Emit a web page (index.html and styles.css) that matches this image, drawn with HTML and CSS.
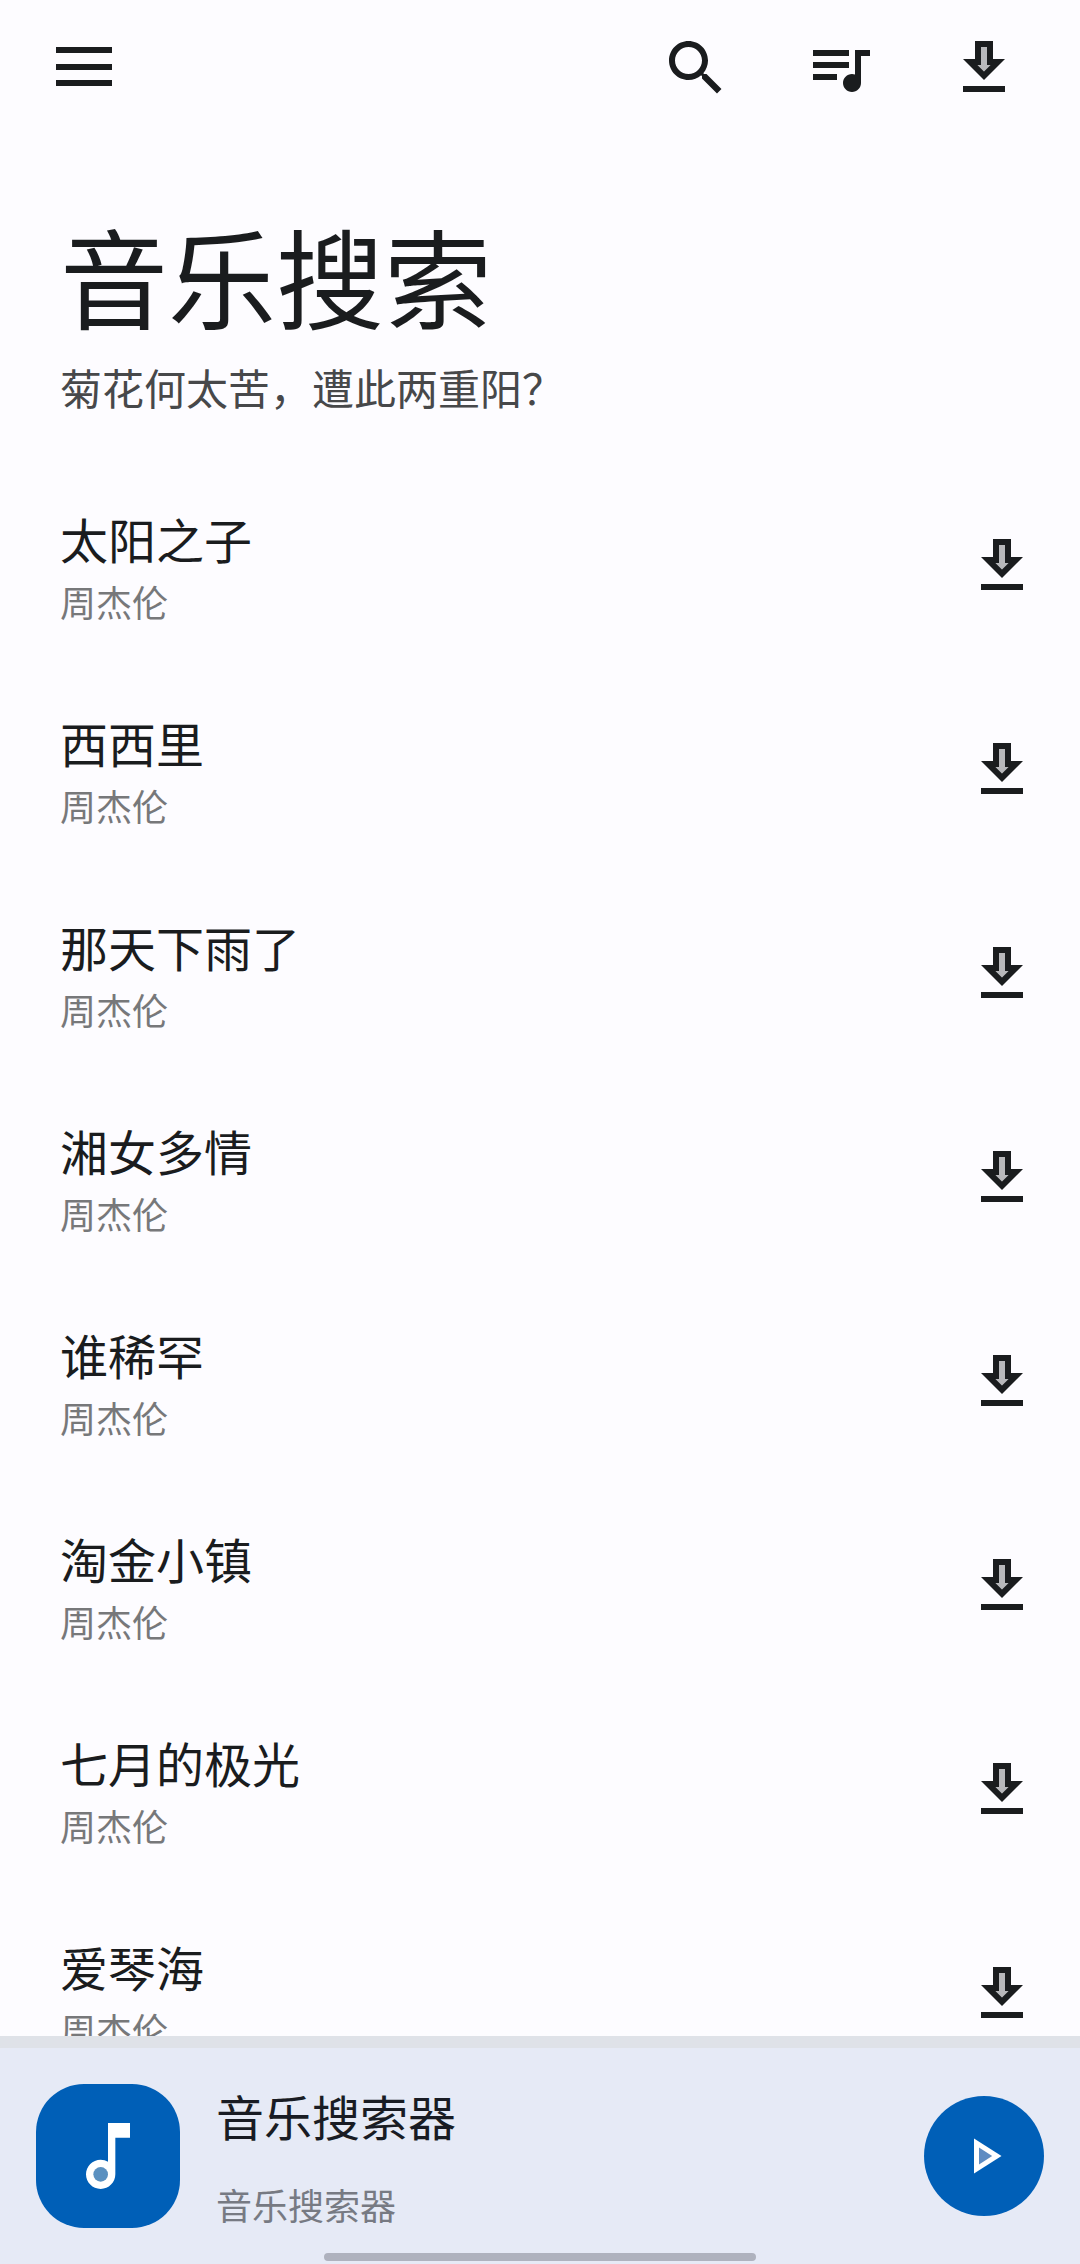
FILE: index.html
```html
<!DOCTYPE html>
<html lang="zh-CN">
<head>
<meta charset="utf-8">
<meta name="viewport" content="width=device-width, initial-scale=1">
<title>音乐搜索</title>
<link rel="stylesheet" href="styles.css">
</head>
<body>
<svg class="sprite" aria-hidden="true">
  <symbol id="download" viewBox="0 0 24 24">
    <path class="tone" d="M9.83 11L12 13.17 14.17 11H13V5h-2v6z"/>
    <path d="M19 9h-4V3H9v6H5l7 7 7-7zm-8 2V5h2v6h1.17L12 13.17 9.83 11H11zm-6 7h14v2H5z"/>
  </symbol>
</svg>
<header class="topbar">
  <button class="menu-button" type="button" aria-label="菜单">
    <svg class="menu-icon" viewBox="0 0 56 42"><path d="M0 0h56v6H0zM0 17h56v6H0zM0 33h56v6H0z"/></svg>
  </button>
  <nav class="actions" aria-label="工具">
    <button class="action" type="button" aria-label="搜索">
      <svg class="icon" viewBox="0 0 24 24"><path d="M15.5 14h-.79l-.28-.27C15.41 12.59 16 11.11 16 9.5 16 5.91 13.09 3 9.5 3S3 5.91 3 9.5 5.91 16 9.5 16c1.61 0 3.09-.59 4.23-1.57l.27.28v.79l5 4.99L20.49 19l-4.99-5zm-6 0C7.01 14 5 11.99 5 9.5S7.01 5 9.5 5 14 7.01 14 9.5 11.99 14 9.5 14z"/></svg>
    </button>
    <button class="action" type="button" aria-label="播放列表">
      <svg class="icon" viewBox="0 0 24 24"><path d="M15 6H3v2h12V6zm0 4H3v2h12v-2zM3 16h8v-2H3v2zM17 6v8.18c-.31-.11-.65-.18-1-.18-1.66 0-3 1.34-3 3s1.34 3 3 3 3-1.34 3-3V8h3V6h-5z"/></svg>
    </button>
    <button class="action" type="button" aria-label="下载管理">
      <svg class="icon"><use href="#download"/></svg>
    </button>
  </nav>
</header>
<main class="content">
  <h1 class="heading">音乐搜索</h1>
  <p class="quote">菊花何太苦，遭此两重阳？</p>
  <ul class="songs">
    <li class="song"><div class="song-text"><h2 class="title">太阳之子</h2><p class="artist">周杰伦</p></div><button class="song-button" type="button" aria-label="下载 太阳之子"><svg class="icon"><use href="#download"/></svg></button></li>
    <li class="song"><div class="song-text"><h2 class="title">西西里</h2><p class="artist">周杰伦</p></div><button class="song-button" type="button" aria-label="下载 西西里"><svg class="icon"><use href="#download"/></svg></button></li>
    <li class="song"><div class="song-text"><h2 class="title">那天下雨了</h2><p class="artist">周杰伦</p></div><button class="song-button" type="button" aria-label="下载 那天下雨了"><svg class="icon"><use href="#download"/></svg></button></li>
    <li class="song"><div class="song-text"><h2 class="title">湘女多情</h2><p class="artist">周杰伦</p></div><button class="song-button" type="button" aria-label="下载 湘女多情"><svg class="icon"><use href="#download"/></svg></button></li>
    <li class="song"><div class="song-text"><h2 class="title">谁稀罕</h2><p class="artist">周杰伦</p></div><button class="song-button" type="button" aria-label="下载 谁稀罕"><svg class="icon"><use href="#download"/></svg></button></li>
    <li class="song"><div class="song-text"><h2 class="title">淘金小镇</h2><p class="artist">周杰伦</p></div><button class="song-button" type="button" aria-label="下载 淘金小镇"><svg class="icon"><use href="#download"/></svg></button></li>
    <li class="song"><div class="song-text"><h2 class="title">七月的极光</h2><p class="artist">周杰伦</p></div><button class="song-button" type="button" aria-label="下载 七月的极光"><svg class="icon"><use href="#download"/></svg></button></li>
    <li class="song"><div class="song-text"><h2 class="title">爱琴海</h2><p class="artist">周杰伦</p></div><button class="song-button" type="button" aria-label="下载 爱琴海"><svg class="icon"><use href="#download"/></svg></button></li>
  </ul>
</main>
<footer class="player">
  <div class="cover">
    <svg class="cover-icon" viewBox="0 0 24 24"><path d="M12 3v10.55c-.59-.34-1.27-.55-2-.55-2.21 0-4 1.79-4 4s1.79 4 4 4 4-1.79 4-4V7h4V3h-6z"/><circle class="cover-dot" cx="10" cy="17" r="2"/></svg>
  </div>
  <div class="player-text">
    <p class="title">音乐搜索器</p>
    <p class="artist">音乐搜索器</p>
  </div>
  <button class="play" type="button" aria-label="播放">
    <svg class="play-icon" viewBox="0 0 24 24"><path d="M8 5v14l11-7z"/><path class="play-inner" d="M10 8.64v6.72L15.27 12z"/></svg>
  </button>
  <span class="home-indicator"></span>
</footer>
</body>
</html>
```

FILE: styles.css
```css
* {
  box-sizing: border-box;
  margin: 0;
  padding: 0;
}

body {
  display: flex;
  flex-direction: column;
  height: 100vh;
  background: #fdfcff;
  color: #1a1c1e;
  font-family: "Noto Sans CJK SC", "Noto Sans", sans-serif;
  font-weight: 400;
}

button {
  display: flex;
  align-items: center;
  justify-content: center;
  border: 0;
  background: none;
  color: inherit;
  cursor: pointer;
}

svg {
  display: block;
  fill: currentColor;
}

.sprite {
  position: absolute;
  width: 0;
  height: 0;
}

.tone {
  opacity: 0.3;
}

.icon {
  width: 72px;
  height: 72px;
}

.topbar {
  display: flex;
  flex: none;
  align-items: center;
  justify-content: space-between;
  height: 136px;
  padding: 0 24px 0 36px;
}

.menu-button {
  width: 96px;
  height: 96px;
}

.menu-icon {
  width: 56px;
  height: 42px;
}

.actions {
  display: flex;
}

.action {
  width: 144px;
  height: 96px;
}

.content {
  flex: 1;
  min-height: 0;
  overflow-y: auto;
  scrollbar-width: none;
}

.heading {
  padding: 58px 60px 0;
  font-size: 108px;
  font-weight: 400;
  line-height: 160px;
}

.quote {
  padding: 0 60px;
  color: #47484a;
  font-size: 42px;
  line-height: 66px;
}

.songs {
  padding-top: 44px;
  list-style: none;
}

.song {
  display: flex;
  align-items: center;
  justify-content: space-between;
  height: 204px;
  padding: 0 30px 0 60px;
}

.song-text {
  padding-top: 6px;
}

.song-button {
  width: 96px;
  height: 96px;
}

.title {
  font-size: 48px;
  font-weight: 400;
  line-height: 64px;
}

.artist {
  color: #77787a;
  font-size: 36px;
  line-height: 62px;
}

.player {
  position: relative;
  display: flex;
  flex: none;
  align-items: center;
  gap: 36px;
  height: 228px;
  padding: 0 36px;
  border-top: 12px solid #dfe2e8;
  background: #e6eaf6;
}

.cover {
  display: flex;
  align-items: center;
  justify-content: center;
  width: 144px;
  height: 144px;
  border-radius: 48px;
  background: #005fb7;
  color: #fff;
}

.cover-icon {
  width: 88px;
  height: 88px;
}

.cover-dot {
  fill: #5a90c0;
}

.player-text {
  display: flex;
  flex: 1;
  flex-direction: column;
  gap: 26px;
  padding-top: 6px;
}

.player .title {
  color: #191c24;
}

.player .artist {
  color: #777a83;
}

.play {
  width: 120px;
  height: 120px;
  border-radius: 50%;
  background: #005fb7;
  color: #fff;
}

.play-icon {
  width: 60px;
  height: 60px;
}

.play-inner {
  fill: #5f8cc2;
}

.home-indicator {
  position: absolute;
  bottom: 3px;
  left: 30%;
  width: 40%;
  height: 8px;
  border-radius: 4px;
  background: #afb2be;
}
```
